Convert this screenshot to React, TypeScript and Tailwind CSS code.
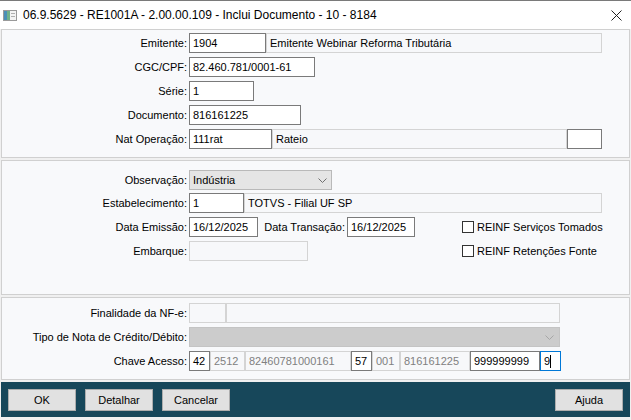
import React from 'react';

const font = { fontFamily: '"Liberation Sans", Arial, sans-serif' };

// white editable field
const Input = ({ w, children }: { w: string; children?: React.ReactNode }) => (
  <div className={`${w} h-5 shrink-0 flex items-center border border-[#7a7a7a] bg-white px-[3px] pt-px text-black whitespace-nowrap overflow-hidden`}>
    {children}
  </div>
);

// read-only field
const ReadOnly = ({ w, gray, children }: { w: string; gray?: boolean; children?: React.ReactNode }) => (
  <div
    className={`${w} h-5 shrink-0 flex items-center border border-[#d4d4d4] bg-[#f7f8fa] px-[3px] pt-px whitespace-nowrap overflow-hidden ${gray ? 'text-[#808080]' : 'text-black'}`}
  >
    {children}
  </div>
);

const Label = ({ children }: { children: React.ReactNode }) => (
  <div className="w-[187px] shrink-0 text-right pr-[2px] pt-px whitespace-nowrap">{children}</div>
);

const Chevron = ({ color }: { color: string }) => (
  <svg width="9" height="5" viewBox="0 0 9 5" className="shrink-0">
    <polyline points="0.5,0.5 4.5,4.5 8.5,0.5" fill="none" stroke={color} strokeWidth="1" />
  </svg>
);

const Checkbox = ({ label }: { label: string }) => (
  <div className="flex items-center gap-[3px]">
    <div className="w-3 h-3 border border-[#333333] bg-white" />
    <span className="whitespace-nowrap pt-px">{label}</span>
  </div>
);

const Button = ({ children }: { children: React.ReactNode }) => (
  <button className="w-[68px] h-[22px] border border-[#adadad] bg-[#e1e1e1] text-black flex items-center justify-center">
    {children}
  </button>
);

export default function App() {
  return (
    <div className="w-[631px] h-[420px] bg-[#f0f0f0] flex flex-col text-[11px] text-black overflow-hidden" style={font}>
      {/* Title bar */}
      <div className="h-[29px] shrink-0 bg-white border-t border-[#7a7a7a] flex items-center pl-[3px] pr-[9px]">
        <svg width="14" height="11" viewBox="0 0 14 11" className="shrink-0">
          <rect x="0.5" y="0.5" width="13" height="10" fill="#f4f4f4" stroke="#9a9a9a" />
          <rect x="1" y="1" width="3" height="9" fill="#4a8fb8" />
          <rect x="4" y="1" width="3" height="9" fill="#6fb08a" />
          <rect x="8" y="3" width="4" height="1" fill="#b0b0b0" />
          <rect x="8" y="6" width="4" height="1" fill="#b0b0b0" />
        </svg>
        <span className="ml-[6px] text-[12px] text-black whitespace-nowrap">
          06.9.5629 - RE1001A - 2.00.00.109 - Inclui Documento - 10 - 8184
        </span>
        <svg width="11" height="11" viewBox="0 0 11 11" className="ml-auto">
          <path d="M0.5 0.5L10.5 10.5M10.5 0.5L0.5 10.5" stroke="#222" strokeWidth="1" />
        </svg>
      </div>

      {/* Panel 1 */}
      <div className="mx-[1px] h-[129px] shrink-0 border border-[#d0d0d0] bg-[#f8f9fb] pt-[3px] flex flex-col gap-1">
        <div className="flex items-center h-5">
          <Label>Emitente:</Label>
          <Input w="w-[77px]">1904</Input>
          <ReadOnly w="w-[336px]">Emitente Webinar Reforma Tributária</ReadOnly>
        </div>
        <div className="flex items-center h-5">
          <Label>CGC/CPF:</Label>
          <Input w="w-[126px]">82.460.781/0001-61</Input>
        </div>
        <div className="flex items-center h-5">
          <Label>Série:</Label>
          <Input w="w-[65px]">1</Input>
        </div>
        <div className="flex items-center h-5">
          <Label>Documento:</Label>
          <Input w="w-[112px]">816161225</Input>
        </div>
        <div className="flex items-center h-5">
          <Label>Nat Operação:</Label>
          <Input w="w-[83px]">111rat</Input>
          <ReadOnly w="w-[295px]">Rateio</ReadOnly>
          <Input w="w-[35px]" />
        </div>
      </div>

      {/* Panel 2 */}
      <div className="mx-[1px] mt-[2px] h-[135px] shrink-0 border border-[#d0d0d0] bg-[#f8f9fb] pt-[9px] flex flex-col">
        <div className="flex items-center h-5">
          <Label>Observação:</Label>
          <div className="w-[143px] h-5 flex items-center justify-between border border-[#b9b9b9] bg-[#e5e5e5] pl-[3px] pr-[4px] pt-px">
            <span>Indústria</span>
            <Chevron color="#707070" />
          </div>
        </div>
        <div className="flex items-center h-5 mt-[3px]">
          <Label>Estabelecimento:</Label>
          <Input w="w-[55px]">1</Input>
          <ReadOnly w="w-[358px]">TOTVS - Filial UF SP</ReadOnly>
        </div>
        <div className="flex items-center h-5 mt-1">
          <Label>Data Emissão:</Label>
          <div className="w-[273px] shrink-0 flex items-center">
            <Input w="w-[69px]">16/12/2025</Input>
            <div className="w-[89px] shrink-0 text-right pr-[2px] pt-px whitespace-nowrap">Data Transação:</div>
            <Input w="w-[68px]">16/12/2025</Input>
          </div>
          <Checkbox label="REINF Serviços Tomados" />
        </div>
        <div className="flex items-center h-5 mt-1">
          <Label>Embarque:</Label>
          <div className="w-[273px] shrink-0 flex items-center">
            <ReadOnly w="w-[119px]" />
          </div>
          <Checkbox label="REINF Retenções Fonte" />
        </div>
      </div>

      {/* Panel 3 */}
      <div className="mx-[1px] mt-[2px] h-[83px] shrink-0 border border-[#d0d0d0] bg-[#f8f9fb] pt-[5px] flex flex-col gap-1">
        <div className="flex items-center h-5">
          <Label>Finalidade da NF-e:</Label>
          <ReadOnly w="w-[37px]" />
          <ReadOnly w="w-[334px]" />
        </div>
        <div className="flex items-center h-5">
          <Label>Tipo de Nota de Crédito/Débito:</Label>
          <div className="w-[371px] h-5 flex items-center justify-end border border-[#c4c4c4] bg-[#cccccc] pr-[5px]">
            <Chevron color="#a6a6a6" />
          </div>
        </div>
        <div className="flex items-center h-5">
          <Label>Chave Acesso:</Label>
          <Input w="w-[21px]">42</Input>
          <ReadOnly w="w-[35px]" gray>2512</ReadOnly>
          <ReadOnly w="w-[106px]" gray>82460781000161</ReadOnly>
          <Input w="w-[21px]">57</Input>
          <ReadOnly w="w-[28px]" gray>001</ReadOnly>
          <ReadOnly w="w-[70px]" gray>816161225</ReadOnly>
          <Input w="w-[70px]">999999999</Input>
          <div className="w-[21px] h-5 shrink-0 flex items-center border border-[#0078d7] bg-white px-[3px] pt-px">
            <span>9</span>
            <span className="w-px h-[13px] bg-black" />
          </div>
        </div>
      </div>

      {/* Footer */}
      <div className="mx-[1px] mt-[2px] h-[35px] shrink-0 bg-[#17475a] flex items-start pt-[7px] px-[7px] gap-[9px]">
        <Button>OK</Button>
        <Button>Detalhar</Button>
        <Button>Cancelar</Button>
        <div className="ml-auto">
          <Button>Ajuda</Button>
        </div>
      </div>
    </div>
  );
}
